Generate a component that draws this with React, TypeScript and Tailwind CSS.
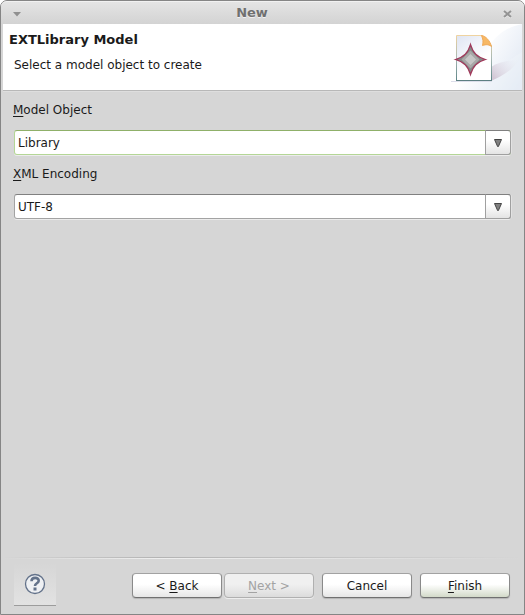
import { useState } from "react";
import type { ButtonHTMLAttributes, ReactNode } from "react";

function Mnemonic({ children }: { children: ReactNode }) {
  return <span className="underline decoration-1 underline-offset-2">{children}</span>;
}

interface ComboProps {
  id: string;
  label: ReactNode;
  options: string[];
  highlighted?: boolean;
}

function Combo({ id, label, options, highlighted }: ComboProps) {
  const [value, setValue] = useState(options[0]);
  return (
    <div className="flex flex-col gap-3">
      <label htmlFor={id} className="h-4 self-start leading-4">
        {label}
      </label>
      <div className="relative mx-px h-[25px]">
        <select
          id={id}
          value={value}
          onChange={(e) => setValue(e.target.value)}
          className={`block h-full w-full appearance-none rounded-[3px] border bg-white pl-[3px] pr-7 text-[#1a1a1a] shadow-[0_1px_0_#ececec,1px_0_0_#e2e2e2] outline-none ${
            highlighted
              ? "border-[#b4d696] border-t-[#8fb069]"
              : "border-[#a3a3a3] border-t-[#808080]"
          }`}
        >
          {options.map((o) => (
            <option key={o}>{o}</option>
          ))}
        </select>
        <span className="pointer-events-none absolute inset-y-0 right-0 flex w-[26px] items-center justify-center rounded-r-[3px] border border-[#a0a0a0] border-t-[#808080] bg-linear-to-b from-white from-40% to-[#e4e4e4]">
          <svg width="8" height="8" viewBox="0 0 8 8" aria-hidden="true">
            <path d="M0.5 0.5H7.5L4.4 7.5H3.6Z" fill="#808080" stroke="#454545" />
          </svg>
        </span>
      </div>
    </div>
  );
}

type Variant = "normal" | "default";

function PushButton({
  variant = "normal",
  ...props
}: ButtonHTMLAttributes<HTMLButtonElement> & { variant?: Variant }) {
  const fill = variant === "default" ? "to-[#d3dac9]" : "to-[#e6e6e6]";
  return (
    <button
      type="button"
      className={`h-[25px] w-[90px] rounded-[4px] border border-[#8a8a8a] border-t-[#a2a2a2] border-b-[#707070] bg-linear-to-b from-white from-45% ${fill} text-[#1a1a1a] shadow-[0_1px_1px_#b4b4b4] disabled:border-[#b0b0b0] disabled:from-[#f0f0f0] disabled:to-[#dcdcdc] disabled:text-[#a3a3a3] disabled:shadow-[0_1px_0_#ededed]`}
      {...props}
    />
  );
}

function WizardArt() {
  return (
    <svg width="75" height="66" viewBox="0 0 75 66" aria-hidden="true" className="shrink-0">
      <defs>
        <linearGradient id="sweep" gradientUnits="userSpaceOnUse" x1="32" y1="24" x2="78" y2="52">
          <stop offset="0" stopColor="#ffffff" />
          <stop offset="0.5" stopColor="#eff3f9" />
          <stop offset="1" stopColor="#dfe7f2" />
        </linearGradient>
        <linearGradient id="paper" x1="0" y1="0" x2="0.6" y2="1">
          <stop offset="0" stopColor="#dfe5f3" />
          <stop offset="0.7" stopColor="#ffffff" />
        </linearGradient>
        <linearGradient id="edge" x1="0" y1="0" x2="0" y2="1">
          <stop offset="0" stopColor="#efd3a0" />
          <stop offset="0.5" stopColor="#a9b9b4" />
          <stop offset="1" stopColor="#5d8587" />
        </linearGradient>
        <linearGradient id="shade" x1="0" y1="0.7" x2="1" y2="0">
          <stop offset="0" stopColor="#d3c8d6" />
          <stop offset="0.9" stopColor="#e7e8f1" stopOpacity="0.1" />
        </linearGradient>
      </defs>
      <path d="M75 0C60 3 50 10 42 22C32 40 18 56 2 66H75Z" fill="url(#sweep)" />
      <path d="M75 28C60 36 50 48 40 66H75Z" fill="#f1f4fa" opacity="0.4" />
      <path d="M44 43C52 38 62 36 72 36C66 46 54 53 44 57Z" fill="url(#shade)" />
      <path d="M4 57.500H45" stroke="#dcdeea" />
      <path d="M9.500 11.500H35L44.500 22V56.500H9.500Z" fill="url(#paper)" stroke="url(#edge)" />
      <path d="M9 56.500H45" stroke="#5d7f82" />
      <path d="M34.500 11.500C39 12 43 17 44.500 22.500C41 20 39 20.500 35.500 21.500C36.500 18 36 15 34.500 11.500Z" fill="#f7b865" stroke="#f0aa58" />
      <path d="M23.500 20.500C26 29 30 33 38.500 35.500C30 38 26 42 23.500 50.500C21 42 17 38 8.500 35.500C17 33 21 29 23.500 20.500Z" fill="#868686" stroke="#a03a5c" strokeWidth="1.200" />
      <path d="M23.500 24C25.500 30 29 33.500 35 35.500C29 37.500 25.500 41 23.500 47C21.500 41 18 37.500 12 35.500C18 33.500 21.500 30 23.500 24Z" fill="#868686" stroke="#868686" />
      <path d="M23.500 26.500L32.500 35.500L23.500 44.500L14.500 35.500Z" fill="#a8a8a8" />
      <path d="M23.500 30L29 35.500L23.500 41L18 35.500Z" fill="#c6c6c6" />
    </svg>
  );
}

export default function App() {
  return (
    <div className="bg-white">
      <main className="flex min-h-screen flex-col rounded-t-[7px] border border-[#858585] bg-[#d6d6d6] px-0.5 pb-2 font-['DejaVu_Sans',sans-serif] text-[12px] text-[#1a1a1a]">
        <div className="-mx-0.5 flex h-[23px] shrink-0 items-center rounded-t-[6px] border-t border-[#f1f1f1] bg-linear-to-b from-[#e4e4e4] to-[#d3d3d3] px-3">
          <button type="button" aria-label="Window menu" className="pt-0.5">
            <svg width="8" height="5" viewBox="0 0 8 5" aria-hidden="true">
              <path d="M0 0H8L4 4.500Z" fill="#909090" />
            </svg>
          </button>
          <span className="flex-1 pr-5 text-center text-[13px] font-bold text-[#707070] [text-shadow:0_1px_0_#f0f0f0]">
            New
          </span>
          <button type="button" aria-label="Close" className="pt-0.5">
            <svg width="9" height="8" viewBox="0 0 9 8" aria-hidden="true" className="block">
              <path d="M1 2L8 8M8 2L1 8" stroke="#f4f4f4" strokeWidth="1.500" />
              <path d="M1 1L8 7M8 1L1 7" stroke="#949494" strokeWidth="2" />
            </svg>
          </button>
        </div>

        <header className="flex shrink-0 justify-between bg-white">
          <div className="pl-1.5 pt-2">
            <h1 className="text-[13px] leading-4 font-bold">EXTLibrary Model</h1>
            <p className="mt-[9px] ml-[5px] leading-4">Select a model object to create</p>
          </div>
          <WizardArt />
        </header>
        <div className="h-0.5 shrink-0 border-t border-[#b8b8b8] bg-[#dedede]" />

        <form className="flex flex-1 flex-col" onSubmit={(e) => e.preventDefault()}>
          <div className="flex flex-col gap-[11px] px-2.5 pt-2.5">
            <Combo
              id="model-object"
              label={<><Mnemonic>M</Mnemonic>odel Object</>}
              options={["Library", "Book", "Writer"]}
              highlighted
            />
            <Combo
              id="xml-encoding"
              label={<><Mnemonic>X</Mnemonic>ML Encoding</>}
              options={["UTF-8", "ASCII", "UTF-16", "ISO-8859-1"]}
            />
          </div>

          <div className="mt-auto">
            <div className="h-px bg-linear-to-r from-transparent via-[#b4b4b4] via-30% to-transparent" />
            <div className="h-px bg-linear-to-r from-transparent via-[#eeeeee] via-30% to-transparent" />
            <div className="flex items-center justify-between pt-1 pr-3 pl-[11px]">
              <button
                type="button"
                aria-label="Help"
                className="flex h-[43px] w-[42px] items-center justify-center border-b border-[#9c9c9c] bg-linear-to-b from-[#d6d6d6] to-[#e2e2e2]"
              >
                <svg width="22" height="22" viewBox="0 0 22 22" aria-hidden="true">
                  <circle cx="11" cy="11" r="9.500" fill="#eef0f3" stroke="#63728a" strokeWidth="1.300" />
                  <path d="M7.500 8.200C7.500 3.800 15 3.800 14.700 7.900C14.500 10.400 11 10.200 11 13" fill="none" stroke="#63728a" strokeWidth="2.600" />
                  <path d="M9.500 14.500H12.500V17.500H9.500Z" fill="#63728a" />
                </svg>
              </button>
              <div className="flex gap-2 pt-0.5">
                <div className="flex gap-0.5">
                  <PushButton>&lt; <Mnemonic>B</Mnemonic>ack</PushButton>
                  <PushButton disabled><Mnemonic>N</Mnemonic>ext &gt;</PushButton>
                </div>
                <PushButton>Cancel</PushButton>
                <PushButton variant="default"><Mnemonic>F</Mnemonic>inish</PushButton>
              </div>
            </div>
          </div>
        </form>
      </main>
    </div>
  );
}
